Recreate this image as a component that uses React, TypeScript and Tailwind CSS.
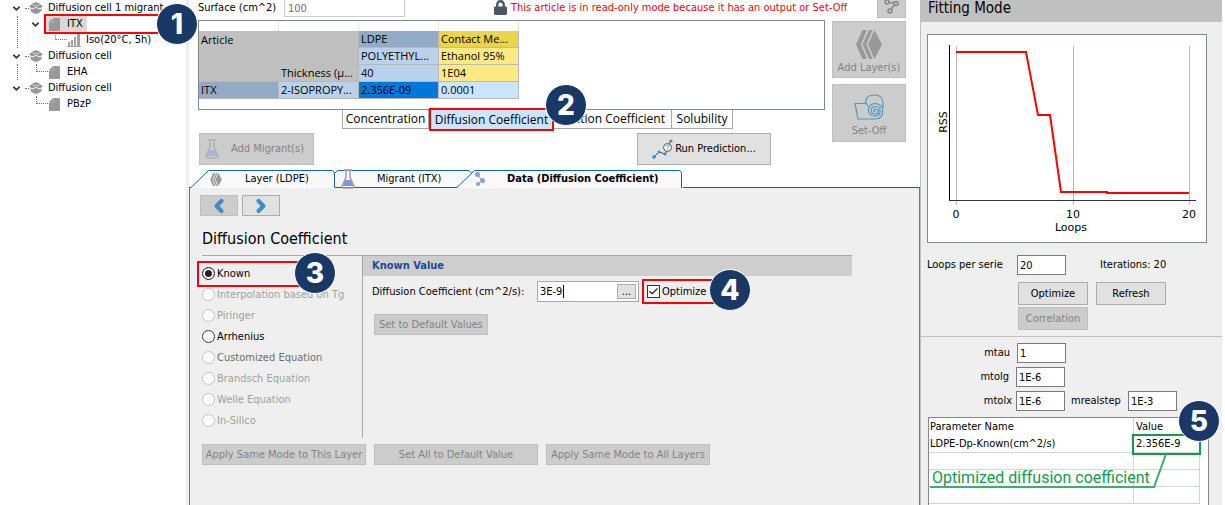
import React, { useState } from "react";
import { Check, ChevronDown, ChevronLeft, ChevronRight } from "lucide-react";
import { FaLock } from "react-icons/fa";

const BoxIcon: React.FC = () => (
  <svg width="14" height="12" viewBox="0 0 14 12" fill="#969696">
    <path d="M2.500 2Q7-1.500 11.500 2L7 3.800Z" />
    <path d="M0 4.500 2.500 2.500 7 4.300l4.500-1.800L14 4.500l-3.400 2L7 4.900 3.400 6.500Z" />
    <path d="M1.500 6.300 3.400 7.400 7 5.800l3.600 1.600 1.900-1.100V9Q10 11.500 7 12 4 11.500 1.500 9Z" />
  </svg>
);

const PageIcon: React.FC = () => (
  <svg width="11" height="13" viewBox="0 0 11 13" fill="#999">
    <path d="M4 0h6a1 1 0 0 1 1 1v11a1 1 0 0 1-1 1H1a1 1 0 0 1-1-1V4Z" />
    <path d="M.5 4.500h4v-4" fill="none" stroke="#b4b4b4" strokeWidth=".8" />
  </svg>
);

const ChartIcon: React.FC = () => (
  <svg width="14" height="14" viewBox="0 0 14 14" fill="#a3a3a3">
    <path d="M1 9h2v4H1zM4 7h2v6H4zM7 4h2v9H7zM10 1h3v12h-3zM0 13h14v1H0z" />
  </svg>
);

const FlaskIcon: React.FC<{ faded?: boolean }> = ({ faded }) => (
  <svg width="14" height="20" viewBox="0 0 14 20" fill="none">
    <path d="m3.500 11-1.500 6h10l-1.500-6Z" fill={faded ? "#a9b5d6" : "#7f96dc"} />
    <path
      d="M3 1h8M5 1v7L1 17.500Q1 19 2.500 19h9Q13 19 13 17.500L9 8V1"
      stroke={faded ? "#b0b0b0" : "#a0a0a0"}
      strokeWidth="1.500"
    />
  </svg>
);

const LayersIcon: React.FC<{ className: string }> = ({ className }) => (
  <svg className={className} viewBox="0 0 26 29" fill="#999">
    <path d="M18.500 0 26 14.500 18.500 29 12 14.500Z" />
    <path d="M13 0h3.500L10.500 14.500 16.500 29H13L6.500 14.500Z" />
    <path d="M6.500 0H11L5 14.500 11 29H6.500L0 14.500Z" />
  </svg>
);

const RollIcon: React.FC = () => (
  <svg width="31" height="26" viewBox="0 0 31 26" fill="none" stroke="#4b97cc" strokeWidth="1.200">
    <path d="M12 9.500H1L4 25h18" />
    <path d="M14 12C9 7 13 1 20 1c6 0 9 3 9 8v5" />
    <path d="M22 25c9 0 9-15-.5-15.500C12 9.500 12 22 21 22c7 0 6.500-9.500.5-9.500-5.500 0-6 7.500-.5 7.500 4.500 0 4-5 .5-5-2.500 0-2.500 3 0 2.500" />
  </svg>
);

const PredictIcon: React.FC = () => (
  <svg width="21" height="20" viewBox="0 0 21 20" fill="none">
    <path d="m2 18 5-5 6 2 2-3M17 5l2-4" stroke="#444" />
    <g fill="#3c8fc6">
      <circle cx="2" cy="18" r="1.800" />
      <circle cx="7" cy="13" r="1.500" />
      <circle cx="13" cy="15" r="1.500" />
      <circle cx="19" cy="2" r="1.600" />
    </g>
    <circle cx="15.500" cy="8.500" r="4" fill="#fff" stroke="#555" />
    <path d="M14 7.500c0-2 3-1.800 3-.2 0 1-1.500 1-1.500 2m0 1v1" stroke="#3c8fc6" />
  </svg>
);

const NodesIcon: React.FC = () => (
  <svg width="15" height="15" viewBox="0 0 15 15" fill="none" stroke="#858585" strokeWidth="1.500">
    <path d="m5 3.500 5 .5M10.500 6 7 10" />
    <circle cx="3" cy="3" r="2" />
    <circle cx="12" cy="4.500" r="2" />
    <circle cx="6" cy="12" r="2" />
  </svg>
);

const MoleculeIcon: React.FC = () => (
  <svg width="11" height="14" viewBox="0 0 11 14" fill="#8a9ddb">
    <path d="m4 2 1 3 3 3-4 4" fill="none" stroke="#8a9ddb" />
    <circle cx="3.500" cy="2.500" r="2.500" />
    <circle cx="8.500" cy="8.500" r="2.500" />
    <circle cx="4" cy="12" r="2" />
  </svg>
);

const Badge: React.FC<{ n: number; className: string }> = ({ n, className }) => (
  <span
    className={`absolute z-10 flex h-[42px] w-[42px] items-center justify-center rounded-full border border-white bg-[#1a3865] font-[Inter] text-[28px] font-extrabold leading-none text-white ${className}`}
  >
    {n}
  </span>
);

const Toggle: React.FC = () => (
  <button className="flex w-[9px] justify-center" aria-label="Collapse">
    <ChevronDown className="h-[11px] w-[11px] shrink-0" strokeWidth={4} color="#404040" />
  </button>
);

const Elbow: React.FC = () => (
  <span className="h-2 w-3 self-start border-b border-l border-dotted border-gray-500" />
);

const Dash: React.FC = () => <span className="w-1 border-b border-dotted border-gray-500" />;

const CellRow: React.FC<{ label: string }> = ({ label }) => (
  <div className="ml-3 flex h-4 items-center">
    <Toggle />
    <span className="ml-1 flex items-center">
      <Dash />
      <BoxIcon />
    </span>
    <span className="ml-[5px] whitespace-nowrap">{label}</span>
  </div>
);

const LeafRow: React.FC<{ label: string }> = ({ label }) => (
  <div className="ml-[18px] flex h-4 items-center">
    <Elbow />
    <span className="ml-px">
      <PageIcon />
    </span>
    <span className="ml-[7px]">{label}</span>
  </div>
);

const Tree: React.FC = () => (
  <nav className="w-[186px] shrink-0">
    <CellRow label="Diffusion cell 1 migrant" />
    <div className="ml-[17px] border-l border-dotted border-gray-500">
      <div className="ml-[13px] flex h-4 items-center">
        <Toggle />
        <div className="relative ml-1 flex h-5 w-[115px] items-center border-2 border-r-0 border-[#f00]">
          <span className="flex h-4 items-center bg-[#d9d9d9] pl-[3px] pr-1">
            <PageIcon />
            <span className="ml-[7px]">ITX</span>
          </span>
          <Badge n={1} className="-right-[39px] -top-[13px]" />
        </div>
      </div>
      <div className="ml-[37px] flex h-4 items-center">
        <Elbow />
        <ChartIcon />
        <span className="ml-[5px]">Iso(20°C, 5h)</span>
      </div>
    </div>
    <CellRow label="Diffusion cell" />
    <div className="ml-[17px] border-l border-dotted border-gray-500">
      <LeafRow label="EHA" />
    </div>
    <CellRow label="Diffusion cell" />
    <div className="ml-[17px] border-l border-transparent">
      <LeafRow label="PBzP" />
    </div>
  </nav>
);

const cell = "border-b border-r border-[#b8b8b8] pl-0.5 whitespace-nowrap overflow-hidden";

const ArticleTable: React.FC = () => (
  <div className="h-[90px] border border-[#828790] bg-white">
    <table className="w-80 table-fixed border-separate border-spacing-0 text-left font-['Open_Sans',sans-serif] text-[11px] leading-4">
      <thead>
        <tr className="h-2.5">
          <td className="border-r border-gray-200" />
          <td className="border-r border-gray-200" />
          <td className="border-r border-gray-200" />
          <td className="border-r border-gray-200" />
        </tr>
      </thead>
      <tbody>
        <tr className="h-[17px]">
          <td className="bg-[#c0c0c0] pl-0.5">Article</td>
          <td className="border-r border-[#b8b8b8] bg-[#c0c0c0]" />
          <td className={`${cell} bg-[#93abc6]`}>LDPE</td>
          <td className={`${cell} bg-[#e9d44c]`}>Contact Me...</td>
        </tr>
        <tr className="h-[17px]">
          <td className="bg-[#c0c0c0]" />
          <td className="border-r border-[#b8b8b8] bg-[#c0c0c0]" />
          <td className={`${cell} bg-[#b9d1ea]`}>POLYETHYL...</td>
          <td className={`${cell} bg-[#fdea84]`}>Ethanol 95%</td>
        </tr>
        <tr className="h-[17px]">
          <td className="border-b border-[#b8b8b8] bg-[#c0c0c0]" />
          <td className={`${cell} bg-[#c0c0c0]`}>Thickness (µ...</td>
          <td className={`${cell} bg-[#b9d1ea]`}>40</td>
          <td className={`${cell} bg-[#fdea84]`}>1E04</td>
        </tr>
        <tr className="h-[17px]">
          <td className={`${cell} bg-[#93abc6]`}>ITX</td>
          <td className={`${cell} bg-[#b9d1ea]`}>2-ISOPROPY...</td>
          <td className={`${cell} bg-[#0078d7]`}>2.356E-09</td>
          <td className={`${cell} bg-[#cce5ff]`}>0.0001</td>
        </tr>
      </tbody>
    </table>
  </div>
);

const disabledButton =
  "flex items-center justify-center border border-[#bfbfbf] bg-[#cccccc] text-[#838383]";
const plainButton = "flex items-center justify-center border border-[#adadad] bg-[#e1e1e1]";

const ArticleSection: React.FC = () => (
  <section className="flex pl-[9px] pr-[14px]">
    <div className="min-w-0 flex-1">
      <div className="flex h-5 items-start">
        <label htmlFor="surface" className="w-[86px] shrink-0 whitespace-nowrap leading-4">
          Surface (cm^2)
        </label>
        <input
          id="surface"
          defaultValue="100"
          disabled
          className="h-[17px] w-[121px] shrink-0 border border-t-0 border-[#cccccc] bg-white px-[3px] text-[#6d6d6d]"
        />
        <FaLock className="ml-[89px] h-[15px] w-[13px] shrink-0 text-[#455a64]" />
        <span className="ml-1 whitespace-nowrap leading-4 text-[#f00]">
          This article is in read-only mode because it has an output or Set-Off
        </span>
      </div>
      <ArticleTable />
      <div className="ml-36 flex h-[19px] font-['Open_Sans',sans-serif] text-xs">
        <button className="w-[87px] border border-t-0 border-[#a8a8a8] bg-white">
          Concentration
        </button>
        <div className="relative -my-0.5 w-[125px] shrink-0">
          <button className="h-[23px] w-full whitespace-nowrap border-2 border-[#f00] bg-[#cce5ff]">
            Diffusion Coefficient
          </button>
          <Badge n={2} className="-right-[33px] -top-6" />
        </div>
        <button className="w-[118px] whitespace-nowrap border-b border-r border-[#a8a8a8] bg-white pr-1.5 text-right">
          Partition Coefficient
        </button>
        <button className="w-[61px] whitespace-nowrap border-b border-r border-[#a8a8a8] bg-white">
          Solubility
        </button>
      </div>
      <div className="mt-1 flex h-8">
        <button disabled className={`${disabledButton} ml-px w-[115px] gap-3 pr-1`}>
          <FlaskIcon faded />
          Add Migrant(s)
        </button>
        <button className={`${plainButton} ml-[323px] w-[134px] gap-0.5 whitespace-nowrap`}>
          <PredictIcon />
          Run Prediction...
        </button>
      </div>
    </div>
    <div className="ml-[7px] flex w-[74px] flex-col">
      <button aria-label="Structure" className={`${disabledButton} h-[18px] w-[29px] self-end border-t-0 pb-1`}>
        <NodesIcon />
      </button>
      <button disabled className={`${disabledButton} mt-[3px] h-[57px] flex-col gap-[3px] pt-1 text-[#9a9a9a]`}>
        <LayersIcon className="h-[29px] w-[26px]" />
        <span className="leading-3">Add Layer(s)</span>
      </button>
      <button disabled className={`${disabledButton} mt-[6px] h-[58px] flex-col gap-[5px] pt-1`}>
        <RollIcon />
        <span className="leading-3">Set-Off</span>
      </button>
    </div>
  </section>
);

const TabStrip: React.FC = () => (
  <div className="mt-[5px] flex h-[18px]">
    <button className="relative w-[146px]">
      <svg className="absolute inset-0" width="146" height="18" fill="#f9f9f9" stroke="#0a64b4">
        <path d="M0 17.500h2L19.500.5h124l2 2v15" />
      </svg>
      <span className="relative flex items-center gap-[22px] pl-5">
        <LayersIcon className="h-[13px] w-[14px]" />
        Layer (LDPE)
      </span>
    </button>
    <button className="relative w-[122px]">
      <svg className="absolute inset-0" width="122" height="18" fill="#f9f9f9" stroke="#0a64b4">
        <path d="M-.5 17.500v-14l3-3H124v17Z" />
      </svg>
      <span className="relative flex h-[17px] items-center gap-[22px] whitespace-nowrap pl-[6px]">
        <FlaskIcon />
        Migrant (ITX)
      </span>
    </button>
    <button className="relative w-[226px]">
      <svg className="absolute inset-0" width="226" height="18" fill="#f9f9f9" stroke="#0a64b4">
        <path d="M0 0h13v5L0 18Z" stroke="none" />
        <path d="M0 .5h12l3 3" />
        <path d="M0 17.500 17.500.5h205l2 2V18" />
      </svg>
      <span className="relative flex items-center gap-[22px] whitespace-nowrap pl-[17px] font-bold">
        <MoleculeIcon />
        Data (Diffusion Coefficient)
      </span>
    </button>
    <span className="flex-1 border-b border-[#0a64b4]" />
  </div>
);

const modes = [
  { label: "Known", color: "text-black" },
  { label: "Interpolation based on Tg", color: "text-[#a0a0a0]", disabled: true },
  { label: "Piringer", color: "text-[#a0a0a0]", disabled: true },
  { label: "Arrhenius", color: "text-black" },
  { label: "Customized Equation", color: "text-[#6d6d6d]", disabled: true },
  { label: "Brandsch Equation", color: "text-[#a0a0a0]", disabled: true },
  { label: "Welle Equation", color: "text-[#a0a0a0]", disabled: true },
  { label: "In-Silico", color: "text-[#a0a0a0]", disabled: true },
];

const DiffusionPanel: React.FC = () => {
  const [mode, setMode] = useState("Known");
  const [value, setValue] = useState("3E-9");
  const [optimize, setOptimize] = useState(true);

  return (
    <section className="flex-1 border-x border-[#777] bg-[#efefef] pl-3 pr-[67px] pt-[7px]">
      <div className="flex gap-1">
        <button disabled aria-label="Previous" className={`${disabledButton} -ml-0.5 h-[21px] w-[38px]`}>
          <ChevronLeft size={20} strokeWidth={5} color="#3c8fc6" />
        </button>
        <button aria-label="Next" className={`${plainButton} h-[21px] w-[38px]`}>
          <ChevronRight size={20} strokeWidth={5} color="#3c8fc6" />
        </button>
      </div>
      <h1 className="mt-3 h-[27px] text-base leading-[22px]">Diffusion Coefficient</h1>
      <div className="flex h-[183px] border-t border-[#a8a8a8]">
        <div className="relative w-[161px] shrink-0 border-r border-[#a8a8a8] pt-[7px]">
          {modes.map((m) => (
            <label
              key={m.label}
              className={`flex h-[21px] items-center gap-0.5 whitespace-nowrap ${m.color}`}
            >
              <input
                type="radio"
                name="mode"
                checked={mode === m.label}
                disabled={m.disabled}
                onChange={() => setMode(m.label)}
                className="h-[13px] w-[13px] appearance-none rounded-full border border-[#333] bg-white checked:bg-[#222] checked:shadow-[inset_0_0_0_2px_#fff] disabled:border-[#c4c4c4]"
              />
              {m.label}
            </label>
          ))}
          <div className="pointer-events-none absolute -left-[5px] top-[5px] h-[26px] w-[119px] border-2 border-r-0 border-[#f00]">
            <Badge n={3} className="-right-5 -top-[11px]" />
          </div>
        </div>
        <div className="flex-1">
          <h2 className="h-5 bg-[#cecece] pl-[9px] font-bold leading-5 text-[#1a4a94]">
            Known Value
          </h2>
          <div className="mt-[3px] flex h-[25px] items-center pl-[9px]">
            <label htmlFor="coef" className="w-[165px] shrink-0 whitespace-nowrap">
              Diffusion Coefficient (cm^2/s):
            </label>
            <div className="flex h-[21px] w-[102px] items-center border border-[#a8a8a8] bg-white pl-0.5 pr-0.5">
              <input
                id="coef"
                value={value}
                onChange={(e) => setValue(e.target.value)}
                className="w-[23px] outline-none"
              />
              <span className="h-[13px] w-px bg-black" />
              <button className={`${plainButton} ml-auto h-[15px] w-[19px] leading-none`}>...</button>
            </div>
            <div className="relative ml-[3px] flex h-[25px] w-[76px] items-center border-2 border-r-0 border-[#f00] pl-[3px]">
              <label className="relative flex items-center gap-0.5">
                <input
                  type="checkbox"
                  checked={optimize}
                  onChange={(e) => setOptimize(e.target.checked)}
                  className="h-[13px] w-[13px] appearance-none border border-[#333] bg-white"
                />
                {optimize && <Check className="absolute left-px" size={11} strokeWidth={3} color="#333" />}
                Optimize
              </label>
              <Badge n={4} className="-right-[33px] -top-3" />
            </div>
          </div>
          <button disabled className={`${disabledButton} ml-[11px] mt-[10px] h-[21px] w-[114px] whitespace-nowrap`}>
            Set to Default Values
          </button>
        </div>
      </div>
      <div className="mt-[6px] flex gap-2">
        <button disabled className={`${disabledButton} h-[21px] w-[164px] whitespace-nowrap`}>
          Apply Same Mode to This Layer
        </button>
        <button disabled className={`${disabledButton} h-[21px] w-[164px] whitespace-nowrap`}>
          Set All to Default Value
        </button>
        <button disabled className={`${disabledButton} h-[21px] w-[164px] whitespace-nowrap`}>
          Apply Same Mode to All Layers
        </button>
      </div>
    </section>
  );
};

const RssChart: React.FC = () => (
  <svg width="280" height="209" viewBox="0 0 280 209" className="font-['DejaVu_Sans',sans-serif] text-[11px]">
    <rect x=".5" y=".5" width="279" height="208" fill="#fff" stroke="#828790" />
    <path d="M29.500 12v159M146.500 12v159M262.500 12v159" stroke="#b8b8b8" />
    <path d="M22.500 11v156" stroke="#000" />
    <path d="M22 166.500h247" stroke="#333" />
    <path
      d="M29 18h70l12 63h12l11 77h46v1h82"
      fill="none"
      stroke="#f00"
      strokeWidth="2"
    />
    <text x="29" y="184" textAnchor="middle">0</text>
    <text x="146" y="184" textAnchor="middle">10</text>
    <text x="262" y="184" textAnchor="middle">20</text>
    <text x="144" y="197" textAnchor="middle">Loops</text>
    <text transform="translate(20 88) rotate(-90)" textAnchor="middle">RSS</text>
  </svg>
);

const field = "h-5 w-[49px] border border-[#7a7a7a] bg-white px-0.5";

const FittingPanel: React.FC = () => (
  <aside className="flex w-[302px] shrink-0 flex-col border-l border-[#c0c0c0] bg-[#efefef]">
    <h1 className="h-[22px] bg-[#c0c0c0] pl-[7px] text-[15px] leading-4">Fitting Mode</h1>
    <div className="pl-[6px] pt-3">
      <RssChart />
    </div>
    <div className="mt-3 flex items-center pl-[6px]">
      <label htmlFor="loops" className="w-[90px]">
        Loops per serie
      </label>
      <input id="loops" defaultValue="20" className={field} />
      <span className="ml-[34px]">Iterations: 20</span>
    </div>
    <div className="ml-[97px] mt-[7px] flex gap-2">
      <button className={`${plainButton} h-[23px] w-[70px]`}>Optimize</button>
      <button className={`${plainButton} h-[23px] w-[70px]`}>Refresh</button>
    </div>
    <button disabled className={`${disabledButton} ml-[97px] mt-0.5 h-[23px] w-[70px]`}>
      Correlation
    </button>
    <div className="mt-[6px] flex flex-col gap-1 border-t border-[#c0c0c0] pt-[6px]">
      <div className="flex items-center">
        <label htmlFor="mtau" className="w-24 pr-[7px] text-right">mtau</label>
        <input id="mtau" defaultValue="1" className={field} />
      </div>
      <div className="flex items-center">
        <label htmlFor="mtolg" className="w-[95px] pr-[7px] text-right">mtolg</label>
        <input id="mtolg" defaultValue="1E-6" className={field} />
      </div>
      <div className="flex items-center">
        <label htmlFor="mtolx" className="w-[95px] pr-1 text-right">mtolx</label>
        <input id="mtolx" defaultValue="1E-6" className={field} />
        <label htmlFor="mrealstep" className="w-[63px] pl-[6px]">mrealstep</label>
        <input id="mrealstep" defaultValue="1E-3" className={field} />
      </div>
    </div>
    <div className="relative ml-[7px] mt-[6px] w-[281px] flex-1 border border-b-0 border-[#828790] bg-white">
      <table className="w-[271px] table-fixed border-separate border-spacing-0 text-left leading-4">
        <colgroup>
          <col className="w-[205px]" />
          <col className="w-[66px]" />
        </colgroup>
        <thead>
          <tr className="h-[18px]">
            <th className="border-r border-gray-300 pl-px font-normal">Parameter Name</th>
            <th className="pl-0.5 font-normal">Value</th>
          </tr>
        </thead>
        <tbody>
          <tr className="h-[17px]">
            <td className="border-b border-r border-gray-300 pl-px">LDPE-Dp-Known(cm^2/s)</td>
            <td className="border-b border-r border-gray-300 pl-0.5">2.356E-9</td>
          </tr>
          {[0, 1, 2].map((i) => (
            <tr key={i} className="h-[17px]">
              <td className="border-b border-r border-gray-300" />
              <td className="border-b border-r border-gray-300" />
            </tr>
          ))}
        </tbody>
      </table>
      {/* callout over the result */}
      <span className="absolute left-[203px] top-4 h-[21px] w-[69px] border-2 border-[#159a4c]" />
      <svg className="absolute left-px top-9" width="240" height="36" fill="none" stroke="#3fae6c" strokeWidth="2">
        <path d="M0 33h224L236 0" />
      </svg>
      <span className="absolute left-[3px] top-[50px] whitespace-nowrap font-[Roboto] text-base leading-5 text-[#159a4c]">
        Optimized diffusion coefficient
      </span>
      <Badge n={5} className="-right-3 -top-[18px]" />
    </div>
  </aside>
);

const App: React.FC = () => (
  <div className="flex min-h-screen overflow-hidden bg-white pr-[3px] font-['DejaVu_Sans_Condensed','DejaVu_Sans',sans-serif] text-[11px] leading-4 text-black">
    <Tree />
    <main className="flex min-w-0 flex-1 flex-col border-l-[3px] border-[#efefef]">
      <ArticleSection />
      <TabStrip />
      <DiffusionPanel />
    </main>
    <FittingPanel />
  </div>
);

export default App;
